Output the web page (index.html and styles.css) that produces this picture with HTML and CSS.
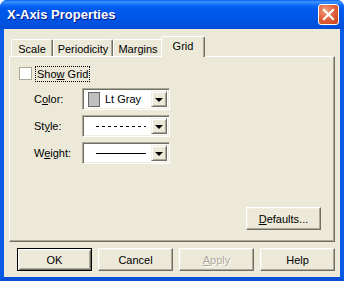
FILE: index.html
```html
<!DOCTYPE html>
<html lang="en">
<head>
  <meta charset="UTF-8" />
  <title>X-Axis Properties</title>
  <link rel="stylesheet" href="styles.css">
</head>
<body>
  <div class="window">
    <div class="titlebar">
      <span class="title">X-Axis Properties</span>
      <div class="close">
        <svg width="13" height="13" viewBox="0 0 13 13">
          <path d="M2 2 L11 11 M11 2 L2 11" stroke="#fff" stroke-width="2.2" stroke-linecap="square" />
        </svg>
      </div>
    </div>

    <div class="frame">
      <div class="tabs">
        <div class="tab t-scale">Scale</div>
        <div class="tab t-period">Periodicity</div>
        <div class="tab t-margins">Margins</div>
        <div class="tab t-grid active">Grid</div>
      </div>

      <div class="panel">
        <div class="check-row">
          <span class="checkbox"></span>
          <span class="focus">Sho<u>w</u> Grid</span>
        </div>

        <div class="fields">
          <div class="field">
            <span class="label">C<u>o</u>lor:</span>
            <div class="combo">
              <div class="value">
                <span class="swatch"></span>
                <span>Lt Gray</span>
              </div>
              <div class="arrow"><span class="tri"></span></div>
            </div>
          </div>
          <div class="field">
            <span class="label">St<u>y</u>le:</span>
            <div class="combo">
              <div class="value"><span class="line dashed"></span></div>
              <div class="arrow"><span class="tri"></span></div>
            </div>
          </div>
          <div class="field">
            <span class="label">W<u>e</u>ight:</span>
            <div class="combo">
              <div class="value"><span class="line solid"></span></div>
              <div class="arrow"><span class="tri"></span></div>
            </div>
          </div>
        </div>

        <div class="panel-foot">
          <div class="btn"><u>D</u>efaults...</div>
        </div>
      </div>

      <div class="buttons">
        <div class="btn default">OK</div>
        <div class="btn">Cancel</div>
        <div class="btn disabled"><u>A</u>pply</div>
        <div class="btn">Help</div>
      </div>
    </div>
  </div>
</body>
</html>
```

FILE: styles.css
```css
body {
  margin: 0;
  background: #fff;
  font-family: 'Liberation Sans', Arial, sans-serif;
  font-size: 11px;
  color: #000;
}

.window {
  width: 344px;
  height: 281px;
  display: flex;
  flex-direction: column;
  border-radius: 7px 7px 0 0;
  overflow: hidden;
  background: #0055e5;
}

.titlebar {
  height: 29px;
  display: flex;
  align-items: center;
  justify-content: space-between;
  padding: 0 5px 0 7px;
  background: linear-gradient(#0a62f2 0, #3f95ff 2px, #0d6bf7 5px, #0058ee 9px, #0056e6 60%, #004ed8 100%);
}

.title {
  color: #fff;
  font-weight: bold;
  font-size: 13px;
  text-shadow: 1px 1px #0a1a8a;
}

.close {
  width: 19px;
  height: 19px;
  border: 1px solid #fff;
  border-radius: 3px;
  background: radial-gradient(circle at 35% 30%, #f0a07f 0, #e2653f 45%, #c8411b 100%);
  display: flex;
  align-items: center;
  justify-content: center;
}

.frame {
  flex: 1;
  display: flex;
  flex-direction: column;
  background: #ece9d8;
  border-left: 4px solid #0a5ae8;
  border-right: 4px solid #0a5ae8;
  border-bottom: 4px solid #0a4fd6;
  padding: 7px 5px 0 5px;
}

.tabs {
  display: flex;
  align-items: flex-end;
  height: 20px;
  padding-left: 2px;
  position: relative;
  z-index: 1;
}

.tab {
  height: 17px;
  box-sizing: border-box;
  border-top: 1px solid #fff;
  border-left: 1px solid #fff;
  border-right: 1px solid #716f64;
  border-radius: 2px 2px 0 0;
  box-shadow: inset -1px 0 #aca899;
  background: #ece9d8;
  display: flex;
  align-items: center;
  justify-content: center;
  padding-top: 1px;
}

.t-scale { width: 42px; }
.t-period { width: 60px; }
.t-margins { width: 50px; }

.tab.active {
  width: 44px;
  height: 21px;
  margin-left: -2px;
  margin-bottom: -1px;
  padding-bottom: 3px;
}

.panel {
  height: 186px;
  box-sizing: border-box;
  border: 1px solid;
  border-color: #fff #716f64 #716f64 #fff;
  box-shadow: inset -1px -1px #aca899;
  display: flex;
  flex-direction: column;
  padding: 9px 13px 11px 9px;
}

.check-row {
  display: flex;
  align-items: center;
  gap: 4px;
  height: 15px;
}

.checkbox {
  width: 11px;
  height: 11px;
  background: #fff;
  border: 1px solid #aca899;
}

.focus {
  outline: 1px dotted #000;
  padding: 0 1px;
  line-height: 14px;
}

.fields {
  display: flex;
  flex-direction: column;
  gap: 5px;
  margin-top: 7px;
  padding-left: 15px;
}

.field {
  display: flex;
  align-items: center;
}

.label {
  width: 48px;
}

.combo {
  width: 88px;
  height: 22px;
  box-sizing: border-box;
  border: 1px solid;
  border-color: #aca899 #fff #fff #aca899;
  box-shadow: inset 1px 1px #716f64, inset -1px -1px #f1efe2;
  padding: 2px;
  display: flex;
  background: #fff;
}

.value {
  flex: 1;
  display: flex;
  align-items: center;
  padding-left: 3px;
  gap: 5px;
}

.swatch {
  width: 10px;
  height: 13px;
  border: 1px solid #666;
  background: #c0c0c0;
}

.line {
  width: 50px;
  height: 1px;
  margin-left: 8px;
}

.line.dashed {
  background: repeating-linear-gradient(90deg, #000 0 3px, transparent 3px 6px);
}

.line.solid {
  background: #000;
}

.arrow {
  width: 16px;
  box-sizing: border-box;
  background: #ece9d8;
  border: 1px solid;
  border-color: #f1efe2 #716f64 #716f64 #f1efe2;
  box-shadow: inset 1px 1px #fff, inset -1px -1px #aca899;
  display: flex;
  align-items: center;
  justify-content: center;
}

.tri {
  width: 0;
  height: 0;
  border-left: 4px solid transparent;
  border-right: 4px solid transparent;
  border-top: 4px solid #000;
  margin-top: 1px;
}

.panel-foot {
  margin-top: auto;
  display: flex;
  justify-content: flex-end;
}

.btn {
  width: 75px;
  height: 23px;
  box-sizing: border-box;
  border: 1px solid;
  border-color: #fff #716f64 #716f64 #fff;
  box-shadow: inset -1px -1px #aca899, inset 1px 1px #f1efe2;
  background: #ece9d8;
  display: flex;
  align-items: center;
  justify-content: center;
}

.buttons {
  display: flex;
  gap: 6px;
  padding-left: 8px;
  margin-top: 6px;
}

.btn.default {
  border-color: #000;
  box-shadow: inset 1px 1px #fff, inset -1px -1px #716f64, inset 2px 2px #f1efe2, inset -2px -2px #aca899;
}

.btn.disabled {
  color: #aca899;
  text-shadow: 1px 1px #fff;
}
```
